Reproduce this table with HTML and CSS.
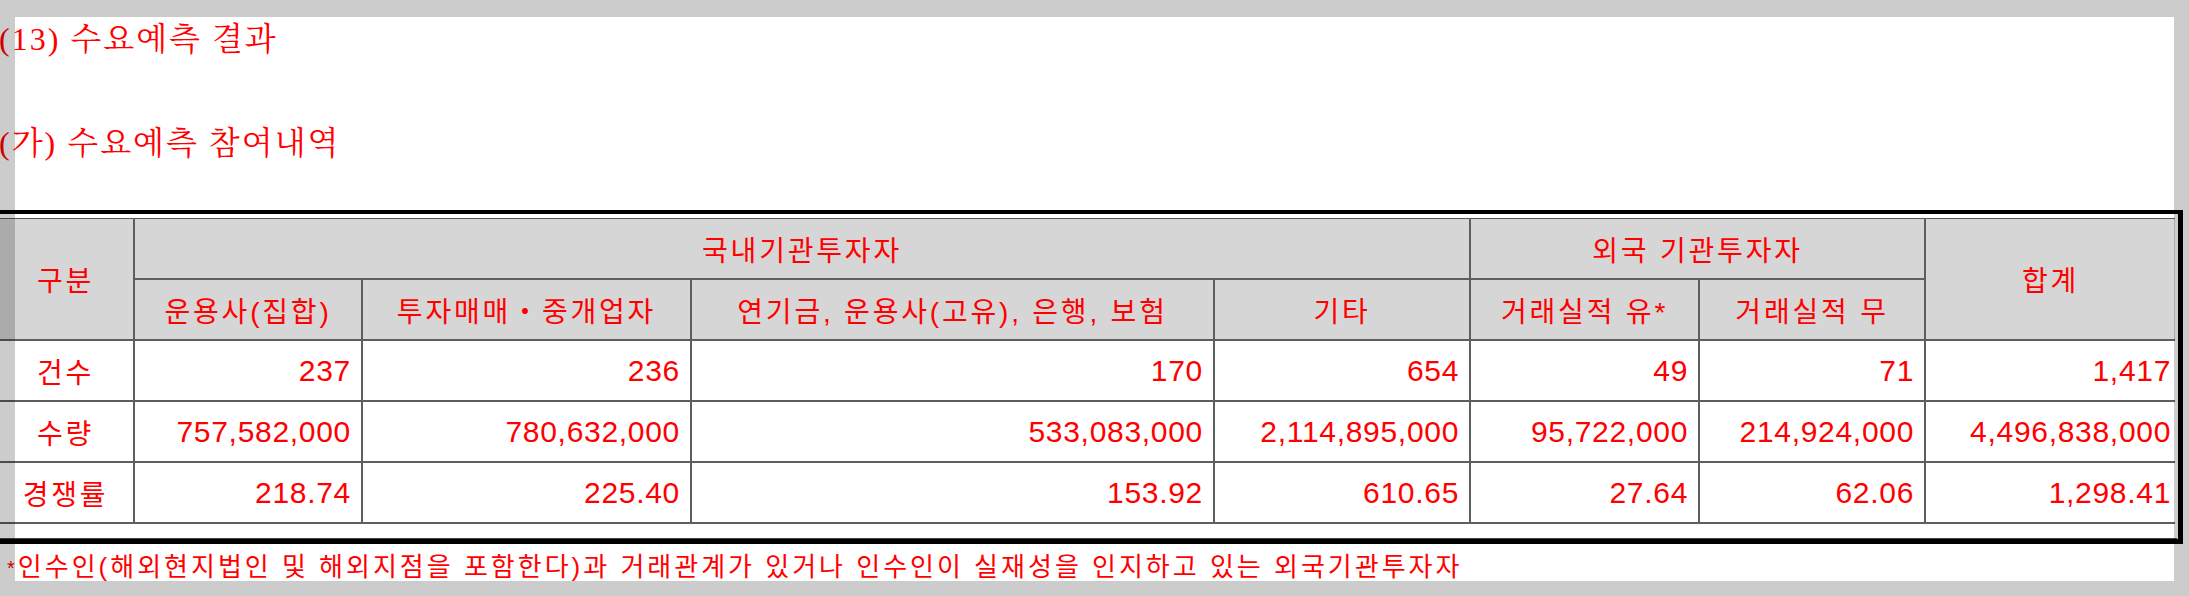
FILE: index.html
```html
<!DOCTYPE html>
<html lang="ko">
<head>
<meta charset="utf-8">
<title>수요예측 결과</title>
<link rel="stylesheet" href="styles.css">
</head>
<body>
<div class="page">
  <h1 class="title t1">(13) 수요예측 결과</h1>
  <h2 class="title t2">(가) 수요예측 참여내역</h2>
  <div class="frame">
    <div class="frame-inner">
      <table class="grid">
        <colgroup>
          <col class="c0"><col class="c1"><col class="c2"><col class="c3"><col class="c4"><col class="c5"><col class="c6"><col class="c7">
        </colgroup>
        <thead>
          <tr>
            <th rowspan="2">구분</th>
            <th colspan="4">국내기관투자자</th>
            <th colspan="2">외국 기관투자자</th>
            <th rowspan="2">합계</th>
          </tr>
          <tr>
            <th>운용사(집합)</th>
            <th>투자매매・중개업자</th>
            <th>연기금, 운용사(고유), 은행, 보험</th>
            <th>기타</th>
            <th>거래실적 유*</th>
            <th>거래실적 무</th>
          </tr>
        </thead>
        <tbody>
          <tr>
            <th class="lbl">건수</th>
            <td>237</td><td>236</td><td>170</td><td>654</td><td>49</td><td>71</td><td class="last">1,417</td>
          </tr>
          <tr>
            <th class="lbl">수량</th>
            <td>757,582,000</td><td>780,632,000</td><td>533,083,000</td><td>2,114,895,000</td><td>95,722,000</td><td>214,924,000</td><td class="last">4,496,838,000</td>
          </tr>
          <tr>
            <th class="lbl">경쟁률</th>
            <td>218.74</td><td>225.40</td><td>153.92</td><td>610.65</td><td>27.64</td><td>62.06</td><td class="last">1,298.41</td>
          </tr>
        </tbody>
      </table>
    </div>
  </div>
  <p class="note"><span class="ast">*</span>인수인(해외현지법인 및 해외지점을 포함한다)과 거래관계가 있거나 인수인이 실재성을 인지하고 있는 외국기관투자자</p>
</div>
<div class="shade shade-top"></div>
<div class="shade shade-left"></div>
<div class="shade shade-right"></div>
<div class="shade shade-bottom"></div>
</body>
</html>
```

FILE: styles.css
```css
html, body {
  margin: 0;
  padding: 0;
  background: #ffffff;
  width: 2189px;
  height: 596px;
  overflow: hidden;
}

.page {
  margin-left: -8px;
  padding-top: 19px;
  color: #ff0000;
}

.title {
  margin: 0 0 0 7px;
  font-family: "Liberation Serif", "Noto Serif CJK KR", "Noto Sans CJK KR", serif;
  font-weight: normal;
  font-size: 32px;
  line-height: 40px;
  letter-spacing: 2px;
}

.t2 {
  margin-top: 64px;
}

.frame {
  margin-top: 47px;
  width: 2179px;
  border: 5px solid #000000;
  border-top-width: 4px;
  padding: 4px 1px 0 1px;
  background: #ffffff;
}

.frame-inner {
  padding-bottom: 14px;
  border-bottom: 1px solid #444444;
}

.grid {
  width: 2177px;
  table-layout: fixed;
  border-collapse: collapse;
  border-top: 1px solid #555555;
  font-family: "Liberation Sans", "Noto Sans CJK KR", sans-serif;
  font-size: 28px;
  color: #ff0000;
}

.c0 { width: 136px; }
.c1 { width: 228px; }
.c2 { width: 329px; }
.c3 { width: 523px; }
.c4 { width: 256px; }
.c5 { width: 229px; }
.c6 { width: 226px; }
.c7 { width: 250px; }

.grid th,
.grid td {
  height: 59px;
  padding: 0;
  border: 2px solid #5e5e5e;
  font-weight: normal;
  white-space: nowrap;
  overflow: hidden;
}

.grid thead th {
  background: #d6d6d6;
  text-align: center;
  letter-spacing: 2.8px;
}

.grid tbody th.lbl {
  background: #ffffff;
  text-align: center;
  letter-spacing: 2.8px;
}

.grid tbody td {
  text-align: right;
  padding-right: 10px;
  font-size: 30px;
  letter-spacing: 0.7px;
  background: #ffffff;
}

.grid tbody td.last {
  padding-right: 4px;
}

.grid thead tr:first-child th {
  border-top: none;
}

.grid tr > :first-child {
  border-left: none;
}

.grid tr > :last-child {
  border-right: none;
}

.note {
  margin: 8px 0 0 15px;
  font-family: "Liberation Sans", "Noto Sans CJK KR", sans-serif;
  font-size: 26px;
  line-height: 30px;
  letter-spacing: 3px;
  color: #ff0000;
}

.ast {
  font-size: 20px;
  vertical-align: 1px;
  margin-right: 0;
}

.shade {
  position: fixed;
  background: rgba(0, 0, 0, 0.2);
}

.shade-top {
  left: 0;
  top: 0;
  width: 2189px;
  height: 17px;
}

.shade-left {
  left: 0;
  top: 17px;
  width: 15px;
  height: 564px;
}

.shade-right {
  left: 2174px;
  top: 17px;
  width: 15px;
  height: 564px;
}

.shade-bottom {
  left: 0;
  top: 581px;
  width: 2189px;
  height: 15px;
}
```
